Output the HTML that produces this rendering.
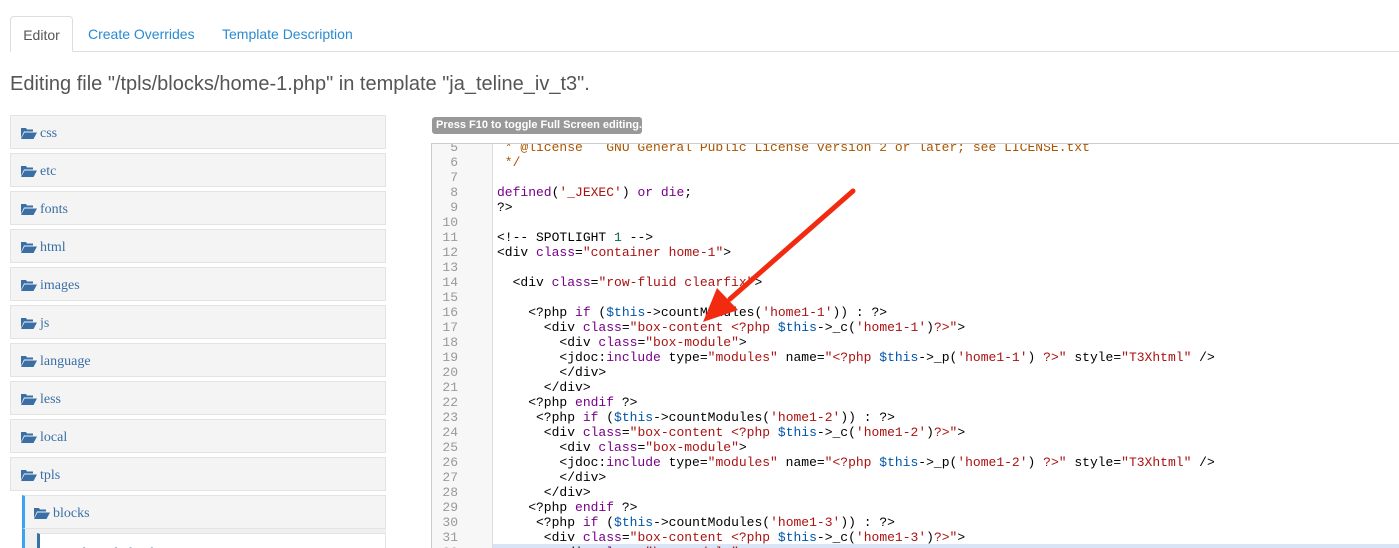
<!DOCTYPE html>
<html style="overflow:hidden"><head><meta charset="utf-8">
<style>
*{margin:0;padding:0;box-sizing:border-box}
html,body{width:1399px;height:548px;overflow:hidden}
body{background:#fff;font-family:"Liberation Sans",sans-serif;position:relative}
.tabline{position:absolute;left:10px;right:0;top:51px;border-top:1px solid #ddd}
.tab{position:absolute;top:16px;height:36px;font-size:14px;line-height:36px;color:#2a8bd0}
.tab.act{left:10px;width:63px;border:1px solid #ddd;border-bottom:1px solid #fff;border-radius:4px 4px 0 0;color:#555;text-align:center;background:#fff}
h2{position:absolute;left:10px;top:71px;font-size:20px;font-weight:normal;color:#555;line-height:26px}
.it{position:absolute;left:10px;width:376px;height:34px;background:#f4f4f4;border:1px solid #e3e3e3;font-family:"Liberation Serif",serif;font-size:14px;color:#3a6fa5;line-height:32px;padding-left:10px;padding-top:2px}
.it svg{vertical-align:-2px;margin-right:3px}
.tip{position:absolute;left:432px;top:117px;width:210px;height:17px;background:#999;border-radius:3px;color:#fff;font-size:11px;font-weight:bold;line-height:17px;padding-left:4px}
.ed{position:absolute;left:431px;top:143px;width:980px;height:420px;border:1px solid #ccc;overflow:hidden}
.gut{position:absolute;left:0;top:0;width:61px;bottom:0;background:#f7f7f7;border-right:1px solid #ddd}
pre{position:absolute;top:-19px;font-family:"Liberation Mono",monospace;font-size:13px;line-height:15px;color:#000}
.ln{left:0;width:26px;text-align:right;color:#999}
.code{left:65px}
.c{color:#a50}.k{color:#708}.s{color:#a11}.v{color:#05a}.n{color:#164}
.hl{position:absolute;left:61px;right:0;top:400px;height:15px;background:#d9e5f7}
</style></head><body>
<div class="tabline"></div>
<div class="tab act">Editor</div>
<div class="tab" style="left:88px">Create Overrides</div>
<div class="tab" style="left:222px">Template Description</div>
<h2>Editing file "/tpls/blocks/home-1.php" in template "ja_teline_iv_t3".</h2>

<div class="it" style="top:115px"><svg width="16" height="12" viewBox="0 0 16 12"><path d="M0 1h5l1 1.5h6v2H3L0 11z" fill="#3a6fa5"/><path d="M3.5 5.5H16L12.5 12H0z" fill="#3a6fa5"/></svg>css</div>
<div class="it" style="top:153px"><svg width="16" height="12" viewBox="0 0 16 12"><path d="M0 1h5l1 1.5h6v2H3L0 11z" fill="#3a6fa5"/><path d="M3.5 5.5H16L12.5 12H0z" fill="#3a6fa5"/></svg>etc</div>
<div class="it" style="top:191px"><svg width="16" height="12" viewBox="0 0 16 12"><path d="M0 1h5l1 1.5h6v2H3L0 11z" fill="#3a6fa5"/><path d="M3.5 5.5H16L12.5 12H0z" fill="#3a6fa5"/></svg>fonts</div>
<div class="it" style="top:229px"><svg width="16" height="12" viewBox="0 0 16 12"><path d="M0 1h5l1 1.5h6v2H3L0 11z" fill="#3a6fa5"/><path d="M3.5 5.5H16L12.5 12H0z" fill="#3a6fa5"/></svg>html</div>
<div class="it" style="top:267px"><svg width="16" height="12" viewBox="0 0 16 12"><path d="M0 1h5l1 1.5h6v2H3L0 11z" fill="#3a6fa5"/><path d="M3.5 5.5H16L12.5 12H0z" fill="#3a6fa5"/></svg>images</div>
<div class="it" style="top:305px"><svg width="16" height="12" viewBox="0 0 16 12"><path d="M0 1h5l1 1.5h6v2H3L0 11z" fill="#3a6fa5"/><path d="M3.5 5.5H16L12.5 12H0z" fill="#3a6fa5"/></svg>js</div>
<div class="it" style="top:343px"><svg width="16" height="12" viewBox="0 0 16 12"><path d="M0 1h5l1 1.5h6v2H3L0 11z" fill="#3a6fa5"/><path d="M3.5 5.5H16L12.5 12H0z" fill="#3a6fa5"/></svg>language</div>
<div class="it" style="top:381px"><svg width="16" height="12" viewBox="0 0 16 12"><path d="M0 1h5l1 1.5h6v2H3L0 11z" fill="#3a6fa5"/><path d="M3.5 5.5H16L12.5 12H0z" fill="#3a6fa5"/></svg>less</div>
<div class="it" style="top:419px"><svg width="16" height="12" viewBox="0 0 16 12"><path d="M0 1h5l1 1.5h6v2H3L0 11z" fill="#3a6fa5"/><path d="M3.5 5.5H16L12.5 12H0z" fill="#3a6fa5"/></svg>local</div>
<div class="it" style="top:457px"><svg width="16" height="12" viewBox="0 0 16 12"><path d="M0 1h5l1 1.5h6v2H3L0 11z" fill="#3a6fa5"/><path d="M3.5 5.5H16L12.5 12H0z" fill="#3a6fa5"/></svg>tpls</div>
<div style="position:absolute;left:22px;top:495px;width:364px;height:53px;background:#f0f0f0;border-left:3px solid #3aa3f5"></div>
<div class="it" style="top:495px;left:22px;width:364px;border-left:3px solid #3aa3f5;padding-left:9px"><svg width="16" height="12" viewBox="0 0 16 12"><path d="M0 1h5l1 1.5h6v2H3L0 11z" fill="#3a6fa5"/><path d="M3.5 5.5H16L12.5 12H0z" fill="#3a6fa5"/></svg>blocks</div>
<div class="it" style="top:533px;left:37px;width:349px;height:15px;overflow:hidden;background:#fff;border-left:3px solid #3a6fa5;border-bottom:none;padding-left:10px;padding-top:0;line-height:40px">&#9646;3-col-spotlight.php</div>

<div class="tip">Press F10 to toggle Full Screen editing.</div>

<div class="ed">
<div class="gut"></div>
<div class="hl"></div>
<pre class="ln">4
5
6
7
8
9
10
11
12
13
14
15
16
17
18
19
20
21
22
23
24
25
26
27
28
29
30
31
32</pre>
<pre class="code"><span class="c"> * @copyright</span>
<span class="c"> * @license   GNU General Public License version 2 or later; see LICENSE.txt</span>
<span class="c"> */</span>

<span class="k">defined</span>(<span class="s">'_JEXEC'</span>) <span class="k">or</span> <span class="k">die</span>;
?&gt;

&lt;!-- SPOTLIGHT <span class="n">1</span> --&gt;
&lt;div <span class="k">class</span>=<span class="s">"container home-1"</span>&gt;

  &lt;div <span class="k">class</span>=<span class="s">"row-fluid clearfix"</span>&gt;

    &lt;?php <span class="k">if</span> (<span class="v">$this</span>-&gt;countModules(<span class="s">'home1-1'</span>)) : ?&gt;
      &lt;div <span class="k">class</span>=<span class="s">"box-content &lt;?php </span><span class="v">$this</span>-&gt;_c(<span class="s">'home1-1'</span>)<span class="s">?&gt;"</span>&gt;
        &lt;div <span class="k">class</span>=<span class="s">"box-module"</span>&gt;
        &lt;jdoc:<span class="k">include</span> type=<span class="s">"modules"</span> name=<span class="s">"&lt;?php </span><span class="v">$this</span>-&gt;_p(<span class="s">'home1-1'</span>) <span class="s">?&gt;"</span> style=<span class="s">"T3Xhtml"</span> /&gt;
        &lt;/div&gt;
      &lt;/div&gt;
    &lt;?php <span class="k">endif</span> ?&gt;
     &lt;?php <span class="k">if</span> (<span class="v">$this</span>-&gt;countModules(<span class="s">'home1-2'</span>)) : ?&gt;
      &lt;div <span class="k">class</span>=<span class="s">"box-content &lt;?php </span><span class="v">$this</span>-&gt;_c(<span class="s">'home1-2'</span>)<span class="s">?&gt;"</span>&gt;
        &lt;div <span class="k">class</span>=<span class="s">"box-module"</span>&gt;
        &lt;jdoc:<span class="k">include</span> type=<span class="s">"modules"</span> name=<span class="s">"&lt;?php </span><span class="v">$this</span>-&gt;_p(<span class="s">'home1-2'</span>) <span class="s">?&gt;"</span> style=<span class="s">"T3Xhtml"</span> /&gt;
        &lt;/div&gt;
      &lt;/div&gt;
    &lt;?php <span class="k">endif</span> ?&gt;
     &lt;?php <span class="k">if</span> (<span class="v">$this</span>-&gt;countModules(<span class="s">'home1-3'</span>)) : ?&gt;
      &lt;div <span class="k">class</span>=<span class="s">"box-content &lt;?php </span><span class="v">$this</span>-&gt;_c(<span class="s">'home1-3'</span>)<span class="s">?&gt;"</span>&gt;
        &lt;div <span class="k">class</span>=<span class="s">"box-module"</span>&gt;</pre>
</div>

<svg style="position:absolute;left:0;top:0" width="1399" height="548">
<line x1="853" y1="191" x2="730" y2="299" stroke="#f22a10" stroke-width="5" stroke-linecap="round"/>
<polygon points="703,322 717,288 738,310" fill="#f22a10"/>
</svg>
</body></html>
